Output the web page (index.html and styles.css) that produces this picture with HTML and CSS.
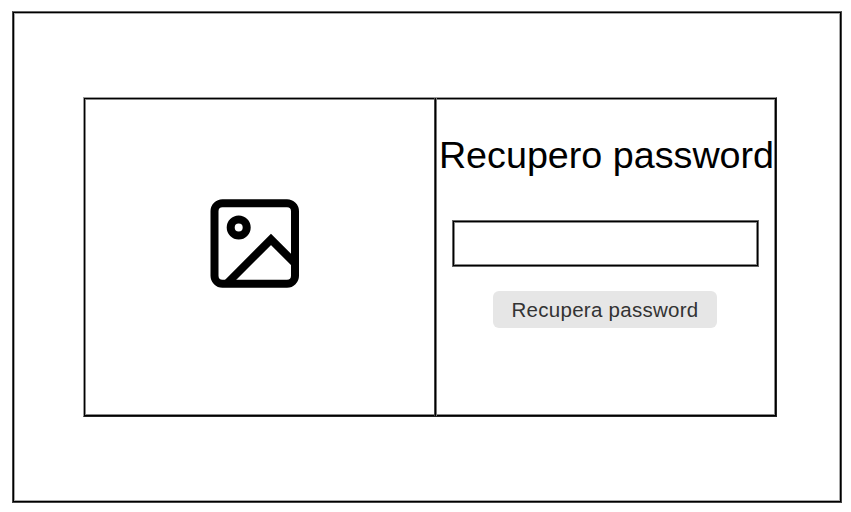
FILE: index.html
```html
<!DOCTYPE html>
<html lang="it">
<head>
<meta charset="utf-8">
<title>Recupero password</title>
<link rel="stylesheet" href="styles.css">
</head>
<body>
<main class="page">
  <section class="card">
    <div class="picture">
      <svg class="picture-icon" viewBox="0 0 110 110" fill="none" stroke="#000" stroke-width="8" aria-hidden="true">
        <rect x="14.5" y="13.2" width="80.5" height="80.6" rx="8"/>
        <circle cx="38.7" cy="37.4" r="8"/>
        <path d="M27 93.5 71 49.4 95 73.4"/>
      </svg>
    </div>
    <form class="recovery">
      <h1 class="title">Recupero password</h1>
      <input class="field" type="text" aria-label="Email">
      <button class="submit" type="button">Recupera password</button>
    </form>
  </section>
</main>
</body>
</html>
```

FILE: styles.css
```css
* { box-sizing: border-box; }
body {
  margin: 0;
  padding: 11px 9px 9px 12px;
  height: 512px;
  overflow: hidden;
  background: #fff;
  font-family: "Liberation Sans", Arial, sans-serif;
}
.page {
  height: 492px;
  padding: 85px 64px 85px 70px;
  border: 1px solid #444;
  border-top-color: #666;
  box-shadow: inset 0 0 0 1px #000, inset 0 0 0 2px #a8a8a8;
}
.card {
  display: flex;
  width: 694px;
  height: 320px;
  border: 1px solid #999;
  border-right-color: #222;
  border-bottom-color: #222;
  box-shadow: inset 0 0 0 1px #000, inset 0 0 0 2px #888;
}
.picture {
  width: 350px;
  padding: 92px 0 0 116px;
}
.picture-icon {
  display: block;
  width: 110px;
  height: 110px;
}
.recovery {
  display: flex;
  flex-direction: column;
  align-items: center;
  width: 342px;
  border-left: 1px solid #444;
  box-shadow: inset 1px 0 #000, inset 2px 0 #777;
}
.title {
  margin: 36px 0 0 2px;
  font-size: 37.7px;
  font-weight: 400;
  line-height: 42px;
  white-space: nowrap;
  color: #000;
}
.field {
  width: 307px;
  height: 47px;
  margin: 44px 0 0;
  padding: 0 12px;
  border: 1px solid #666;
  border-radius: 0;
  outline: 0;
  background: #fff;
  box-shadow: inset 0 0 0 1px #000, inset 0 0 0 2px #888;
  font: 20px "Liberation Sans", Arial, sans-serif;
}
.submit {
  width: 224px;
  height: 37.5px;
  margin: 23.7px 1px 0 0;
  padding: 0;
  border: 0;
  border-radius: 6px;
  background: #e6e6e6;
  color: #333;
  font: 20.5px/37px "Liberation Sans", Arial, sans-serif;
  letter-spacing: 0.27px;
}
```
